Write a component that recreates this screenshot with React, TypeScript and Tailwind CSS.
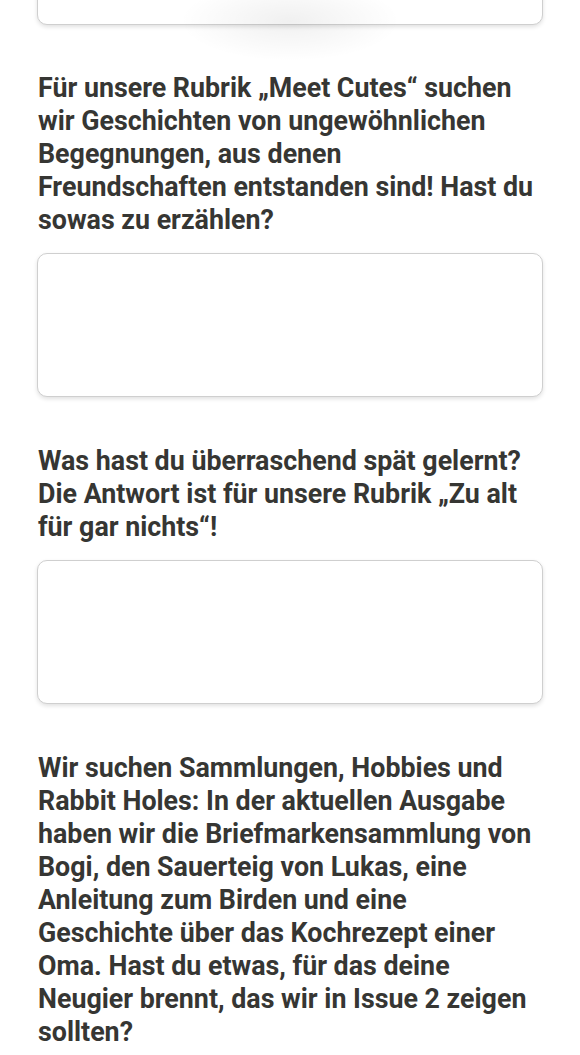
import React from 'react';

const questions = [
    'Für unsere Rubrik „Meet Cutes“ suchen wir Geschichten von ungewöhnlichen Begegnungen, aus denen Freundschaften entstanden sind! Hast du sowas zu erzählen?',
    'Was hast du überraschend spät gelernt? Die Antwort ist für unsere Rubrik „Zu alt für gar nichts“!',
    'Wir suchen Sammlungen, Hobbies und Rabbit Holes: In der aktuellen Ausgabe haben wir die Briefmarkensammlung von Bogi, den Sauerteig von Lukas, eine Anleitung zum Birden und eine Geschichte über das Kochrezept einer Oma. Hast du etwas, für das deine Neugier brennt, das wir in Issue 2 zeigen sollten?'
];

const AnswerBox: React.FC<{ className?: string }> = ({ className = '' }) => (
    <textarea
        className={`block w-full h-[144px] resize-none rounded-[10px] border border-[#cfcfcf] bg-white shadow-[0_2px_4px_rgba(0,0,0,0.12)] outline-none ${className}`}
    />
);

export default function App() {
    return (
        <div className="min-h-[1055px] w-[580px] overflow-hidden bg-white font-['Roboto',sans-serif] text-[#363633]">
            <div className="px-[37px]">
                {/* previous answer box, scrolled mostly out of view */}
                <div className="relative -mt-[119px]">
                    <AnswerBox />
                    <div className="pointer-events-none absolute left-1/2 top-[100px] h-[80px] w-[220px] -translate-x-1/2 rounded-full bg-[radial-gradient(closest-side,rgba(0,0,0,0.06),rgba(0,0,0,0))]" />
                </div>

                {questions.map((q, i) => (
                    <div key={i} className={i === 0 ? 'mt-[47px]' : 'mt-[48px]'}>
                        <p className="w-[497px] pl-px text-[26.8px] font-bold leading-[33px]">{q}</p>
                        {i < 2 && <AnswerBox className="mt-[16px]" />}
                    </div>
                ))}
            </div>
        </div>
    );
}
